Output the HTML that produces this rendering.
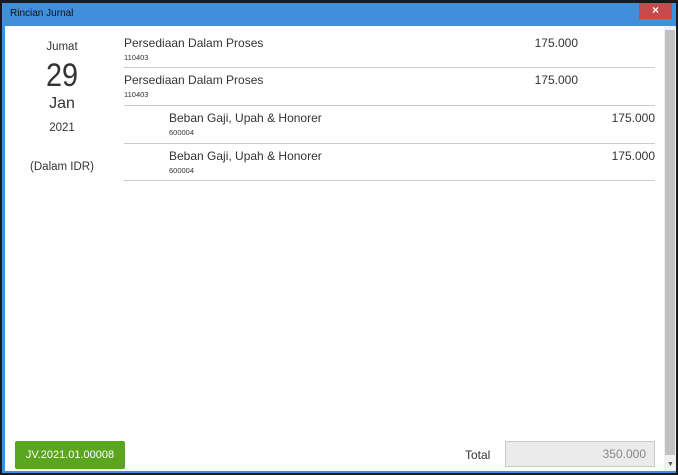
<html><head><style>
body{margin:0;width:678px;height:475px;background:#1a1a1a;position:relative;overflow:hidden;font-family:"Liberation Sans",sans-serif;color:#222}
.win{position:absolute;left:2px;top:3px;width:674px;height:470px;background:#3f8fdc}
.title{position:absolute;left:10px;top:8px;font-size:10px;color:#111}
.close{position:absolute;left:639px;top:3px;width:33px;height:16px;background:#c9494d;color:#fff;font-size:12px;font-weight:bold;text-align:center;line-height:15px}
.body{position:absolute;left:5px;top:26px;width:671px;height:445px;background:#fff}
.sb{position:absolute;left:664px;top:26px;width:12px;height:445px;background:#f0f0f0}
.thumb{position:absolute;left:1px;top:4px;width:10px;height:425px;background:#c1c1c1}
.a{position:absolute;font-size:12px;color:#333}
.r{text-align:right;width:100px}
.s{position:absolute;font-size:7.5px;color:#333}
.ln{position:absolute;left:124px;width:531px;height:1px;background:#ccc}
.btn{position:absolute;left:15px;top:441px;width:110px;height:28px;background:#5aa61e;color:#fff;font-size:11px;text-align:center;line-height:28px;border-radius:2px}
.tot{position:absolute;left:505px;top:441px;width:150px;height:26px;background:#ebebeb;border:1px solid #c8c8c8;box-sizing:border-box;text-align:right;padding-right:8px;line-height:24px;font-size:12px;color:#888}
</style></head><body>
<div class="win"></div>
<div class="title">Rincian Jurnal</div>
<div class="close">×</div>
<div class="body"></div>
<div class="sb"><div class="thumb"></div><div style="position:absolute;left:3px;top:435px;font-size:7px;color:#555">▼</div></div>
<div class="a" style="left:0;width:124px;text-align:center;top:41px;font-size:11.5px">Jumat</div>
<div class="a" style="left:0;width:124px;text-align:center;top:57px;font-size:32px;transform:scaleX(.9)">29</div>
<div class="a" style="left:0;width:124px;text-align:center;top:95px;font-size:16px">Jan</div>
<div class="a" style="left:0;width:124px;text-align:center;top:122px;font-size:11.5px">2021</div>
<div class="a" style="left:0;width:124px;text-align:center;top:161px;font-size:11.5px">(Dalam IDR)</div>
<div class="a" style="left:124px;top:36px">Persediaan Dalam Proses</div><div class="s" style="left:124px;top:53px">110403</div><div class="a r" style="left:478px;top:36px">175.000</div>
<div class="ln" style="top:67px"></div>
<div class="a" style="left:124px;top:73px">Persediaan Dalam Proses</div><div class="s" style="left:124px;top:90px">110403</div><div class="a r" style="left:478px;top:73px">175.000</div>
<div class="ln" style="top:105px"></div>
<div class="a" style="left:169px;top:111px">Beban Gaji, Upah &amp; Honorer</div><div class="s" style="left:169px;top:128px">600004</div><div class="a r" style="left:555px;top:111px">175.000</div>
<div class="ln" style="top:143px"></div>
<div class="a" style="left:169px;top:149px">Beban Gaji, Upah &amp; Honorer</div><div class="s" style="left:169px;top:166px">600004</div><div class="a r" style="left:555px;top:149px">175.000</div>
<div class="ln" style="top:180px"></div>
<div class="btn">JV.2021.01.00008</div>
<div class="a" style="left:465px;top:448px">Total</div>
<div class="tot">350.000</div>
</body></html>
